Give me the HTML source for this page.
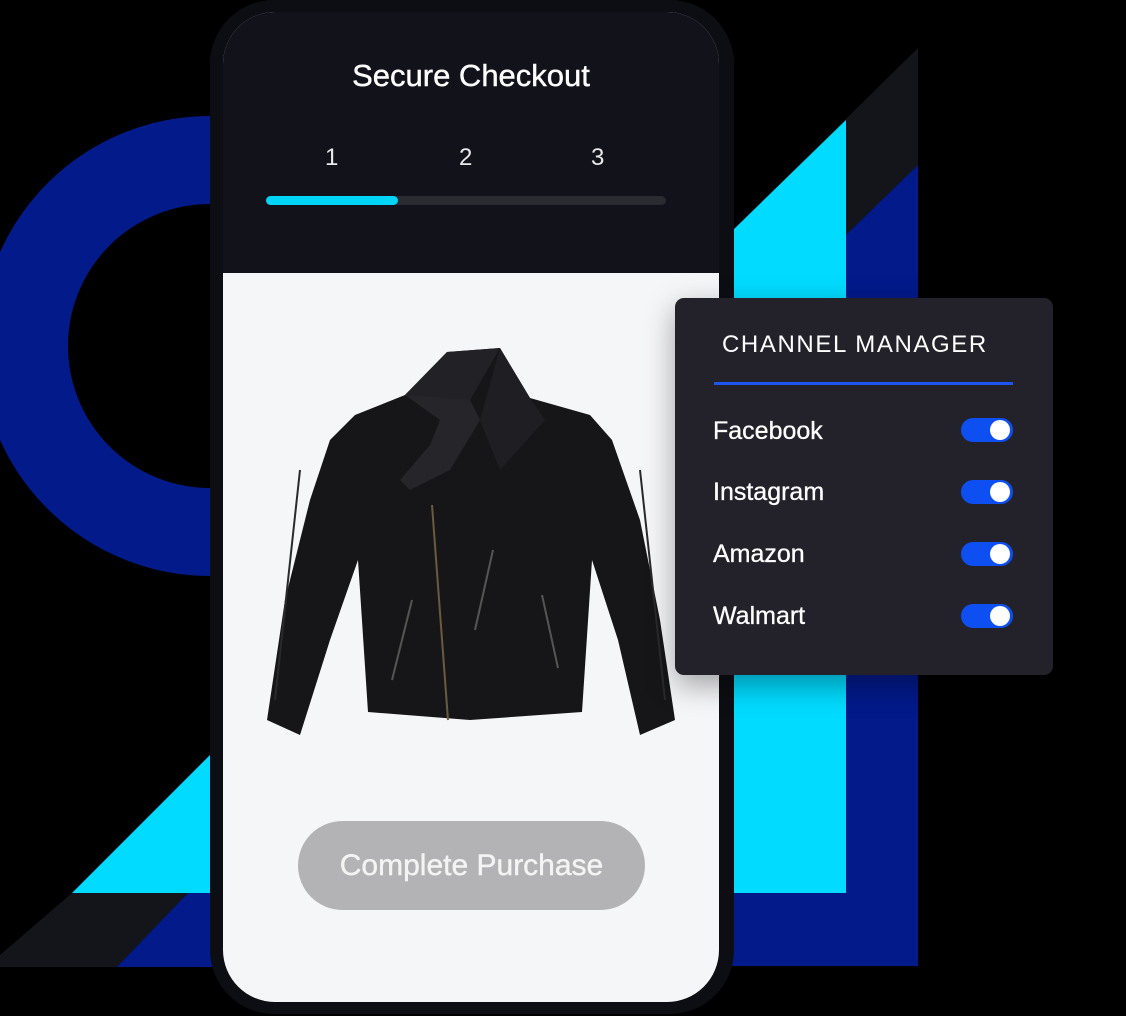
<!DOCTYPE html>
<html><head><meta charset="utf-8"><style>
html,body{margin:0;padding:0;background:#000;}
body{width:1126px;height:1016px;position:relative;overflow:hidden;font-family:"Liberation Sans",sans-serif;}
.abs{position:absolute;}
.phone{left:210px;top:0;width:524px;height:1014px;background:#0c0e13;border-radius:64px;}
.screen{left:223px;top:12px;width:496px;height:990px;border-radius:52px;overflow:hidden;background:#f5f6f8;}
.head{left:0;top:0;width:496px;height:261px;background:#12121a;}
.title{left:0;top:46px;width:496px;text-align:center;color:#fff;font-size:31px;-webkit-text-stroke:0.4px #fff;}
.num{top:132px;color:#e8e8ea;font-size:24px;}
.track{left:43px;top:184px;width:400px;height:9px;border-radius:5px;background:#2a2a31;}
.fill{left:43px;top:184px;width:132px;height:9px;border-radius:5px;background:#00d5f7;}
.btn{left:75px;top:809px;width:347px;height:89px;border-radius:45px;background:#b3b3b5;color:#f4f4f4;font-size:30px;text-align:center;line-height:89px;-webkit-text-stroke:0.4px #f4f4f4;}
.card{left:675px;top:298px;width:378px;height:377px;background:#23222b;border-radius:9px;box-shadow:0 10px 30px rgba(0,0,0,.35);}
.ch{left:47px;top:33px;color:#fff;font-size:24px;letter-spacing:1.6px;}
.line{left:39px;top:84px;width:299px;height:3px;background:#1d55f3;}
.row{left:38px;color:#fff;font-size:25px;-webkit-text-stroke:0.3px #fff;}
.tg{left:286px;width:52px;height:24px;border-radius:12px;background:#0e4ff2;}
.tg:after{content:"";position:absolute;right:3px;top:2px;width:20px;height:20px;border-radius:50%;background:#fff;}
</style></head><body>
<svg class="abs" style="left:0;top:0" width="1126" height="1016">
<circle cx="210" cy="346" r="186" fill="none" stroke="#021a8a" stroke-width="88"/>
<polygon points="72,893 215,750 215,893" fill="#00dbff"/>
<polygon points="72,893 215,893 215,967 0,967 0,955" fill="#14141b"/>
<polygon points="188,893 215,893 215,967 117,967" fill="#021a8a"/>
<polygon points="731,232 918,48 918,893 731,893" fill="#14141b"/>
<polygon points="731,232 846,120 846,893 731,893" fill="#00dbff"/>
<polygon points="846,235 918,165 918,966 731,966 731,893 846,893" fill="#021a8a"/>
</svg>
<div class="abs phone"></div>
<div class="abs screen">
 <div class="abs head"></div>
 <div class="abs title">Secure Checkout</div>
 <div class="abs num" style="left:102px">1</div>
 <div class="abs num" style="left:236px">2</div>
 <div class="abs num" style="left:368px">3</div>
 <div class="abs track"></div>
 <div class="abs fill"></div>
 <svg class="abs" style="left:-223px;top:-12px" width="1126" height="1016">
  <polygon points="447,352 500,348 530,398 590,415 612,440 640,520 660,620 675,720 640,735 618,640 592,560 582,712 470,720 368,712 358,560 330,640 300,735 267,720 285,600 310,500 330,440 355,415 405,395" fill="#161618"/>
  <polygon points="447,352 500,348 470,400 440,420 405,395" fill="#222226"/>
  <polygon points="405,395 440,420 430,445 400,480 410,490 450,470 480,420 470,400" fill="#26262a"/>
  <polygon points="500,348 530,398 545,420 500,470 480,420" fill="#1f1f23"/>
  <line x1="432" y1="505" x2="448" y2="720" stroke="#6a5a40" stroke-width="2"/>
  <line x1="493" y1="550" x2="475" y2="630" stroke="#555" stroke-width="2"/>
  <line x1="412" y1="600" x2="392" y2="680" stroke="#555" stroke-width="2"/>
  <line x1="542" y1="595" x2="558" y2="668" stroke="#555" stroke-width="2"/>
  <path d="M300 470 Q290 560 275 700" stroke="#2a2a2c" stroke-width="2" fill="none"/>
  <path d="M640 470 Q650 560 665 700" stroke="#2a2a2c" stroke-width="2" fill="none"/>
 </svg>
 <div class="abs btn">Complete Purchase</div>
</div>
<div class="abs card">
 <div class="abs ch">CHANNEL MANAGER</div>
 <div class="abs line"></div>
 <div class="abs row" style="top:119px">Facebook</div><div class="abs tg" style="top:120px"></div>
 <div class="abs row" style="top:180px">Instagram</div><div class="abs tg" style="top:182px"></div>
 <div class="abs row" style="top:242px">Amazon</div><div class="abs tg" style="top:244px"></div>
 <div class="abs row" style="top:304px">Walmart</div><div class="abs tg" style="top:306px"></div>
</div>
</body></html>
